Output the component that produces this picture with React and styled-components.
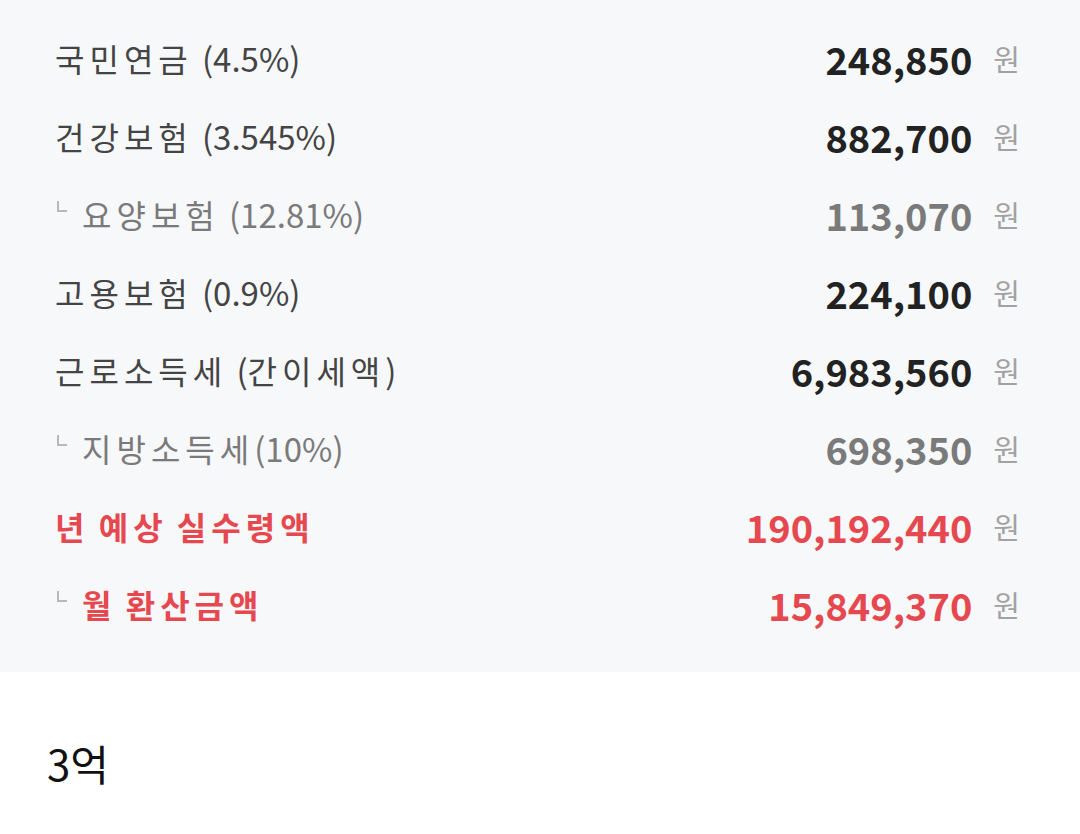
import React from 'react';
import styled, { createGlobalStyle } from 'styled-components';

const GlobalStyle = createGlobalStyle`
  body {
    margin: 0;
    background: #fff;
    font-family: 'Noto Sans CJK KR', 'Noto Sans', sans-serif;
  }
`;

const Panel = styled.div`
  background: #f7f8fa;
  padding: 19px 60px 29px 55px;
`;

const Row = styled.div`
  display: flex;
  align-items: center;
  justify-content: space-between;
  height: 78px;
`;

const toneColor = (tone, base) =>
  tone === 'red' ? '#e5484f' : tone === 'sub' ? '#7a7a7a' : base;

const Label = styled.div`
  display: flex;
  align-items: center;
  font-size: 32px;
  color: ${(p) => toneColor(p.$tone, '#444')};
  font-weight: ${(p) => (p.$tone === 'red' ? 700 : 400)};
  white-space: pre;
  word-spacing: -3px;
`;

const Hangul = styled.span`
  letter-spacing: 5px;
`;

const Latin = styled.span`
  font-size: 33px;
`;

const Corner = styled.span`
  display: inline-block;
  width: 8px;
  height: 9px;
  border-left: 2px solid #b8b8b8;
  border-bottom: 2px solid #b8b8b8;
  margin: 0 15px 16px 2px;
`;

const Amount = styled.div`
  display: flex;
  align-items: center;
  gap: 21px;
`;

const Number = styled.span`
  font-size: 38px;
  font-weight: 700;
  color: ${(p) => toneColor(p.$tone, '#222')};
`;

const Won = styled.span`
  font-size: 29px;
  color: #a2a2a2;
`;

const Caption = styled.div`
  padding: 60px 47px;
  font-size: 42px;
  color: #111;
`;

const rows = [
  { label: '국민연금 (4.5%)', value: '248,850' },
  { label: '건강보험 (3.545%)', value: '882,700' },
  { label: '요양보험 (12.81%)', value: '113,070', tone: 'sub', child: true },
  { label: '고용보험 (0.9%)', value: '224,100' },
  { label: '근로소득세 (간이세액)', value: '6,983,560' },
  { label: '지방소득세(10%)', value: '698,350', tone: 'sub', child: true },
  { label: '년 예상 실수령액', value: '190,192,440', tone: 'red' },
  { label: '월 환산금액', value: '15,849,370', tone: 'red', child: true },
];

// hangul in the source font runs wider than latin, so space it out separately
const renderLabel = (text) =>
  text.split(/([\uac00-\ud7a3 ]+)/).filter(Boolean).map((part, i) =>
    /[\uac00-\ud7a3]/.test(part) ? <Hangul key={i}>{part}</Hangul> : <Latin key={i}>{part}</Latin>
  );

export default function App() {
  return (
    <>
      <GlobalStyle />
      <Panel>
        {rows.map((r) => (
          <Row key={r.label}>
            <Label $tone={r.tone}>
              {r.child && <Corner />}
              {renderLabel(r.label)}
            </Label>
            <Amount>
              <Number $tone={r.tone}>{r.value}</Number>
              <Won>원</Won>
            </Amount>
          </Row>
        ))}
      </Panel>
      <Caption>3억</Caption>
    </>
  );
}
